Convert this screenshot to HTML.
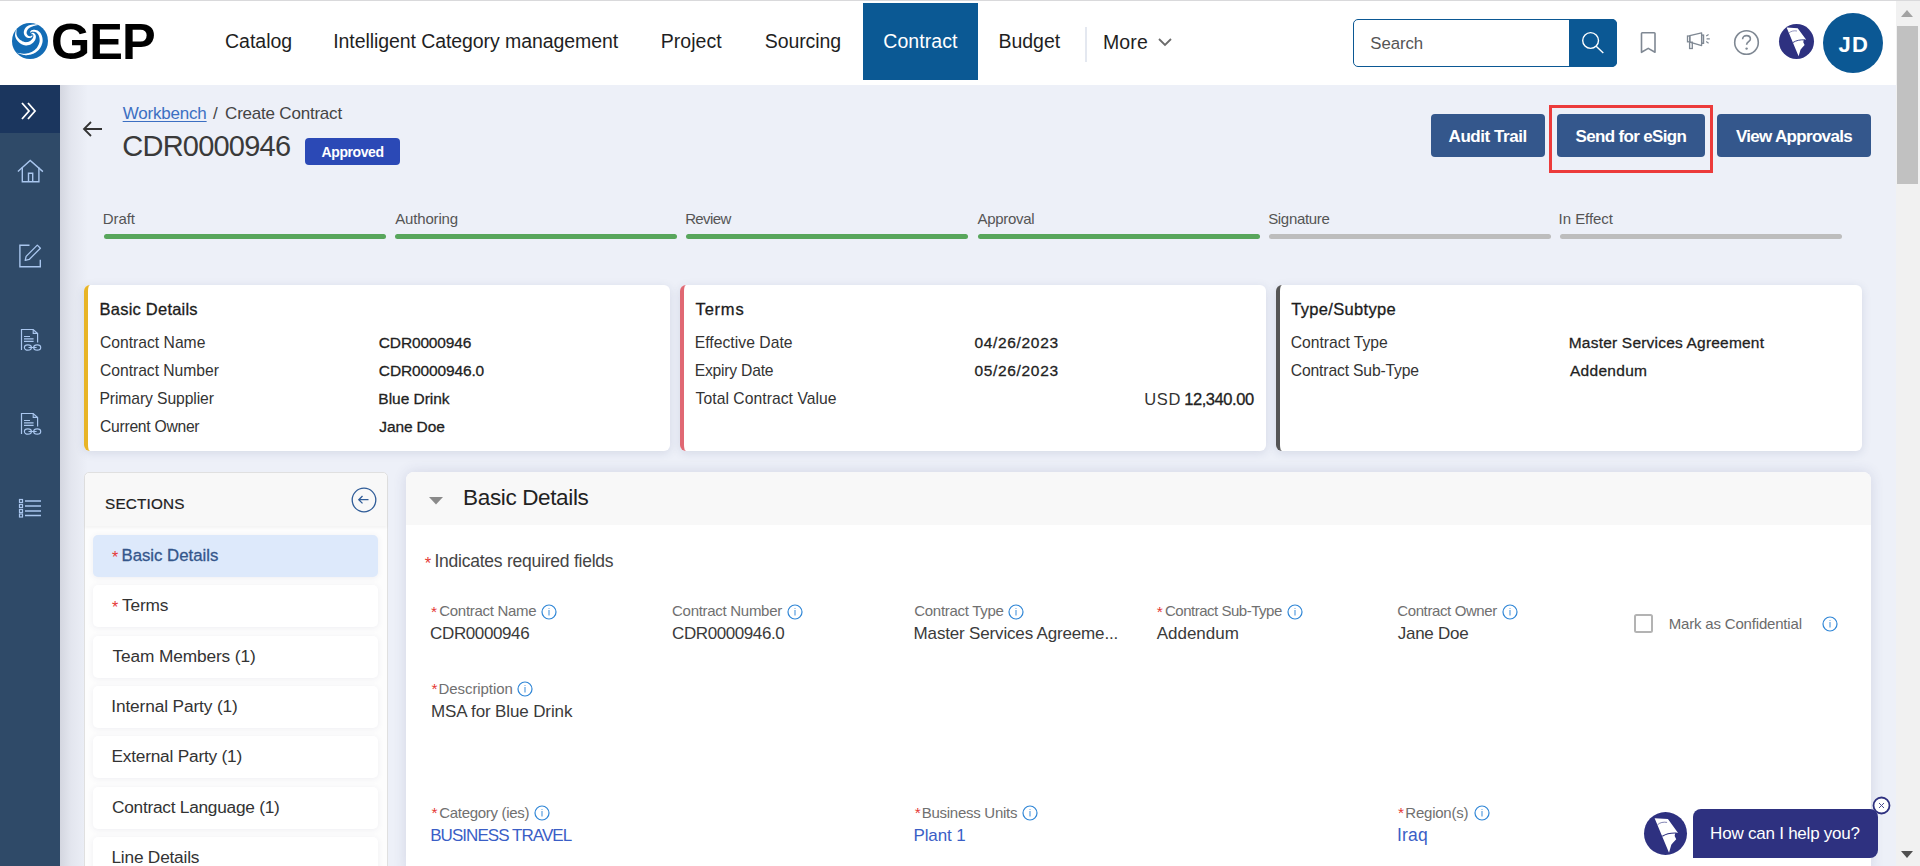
<!DOCTYPE html>
<html><head><meta charset="utf-8"><title>GEP Contract</title>
<style>
html,body{margin:0;padding:0;}
body{width:1920px;height:866px;overflow:hidden;position:relative;background:#edf0f8;font-family:"Liberation Sans", sans-serif;}
.t{position:absolute;line-height:1;white-space:nowrap;}
.b{position:absolute;}
svg.b{overflow:visible;}
</style></head><body>
<div class="b" style="left:0px;top:0px;width:1896px;height:85px;background:#fff;"></div>
<div class="b" style="left:0px;top:0px;width:1920px;height:1px;background:#d9d9db;"></div>
<svg class="b" style="left:12px;top:23px" width="36" height="36" viewBox="0 0 36 36"><circle cx="18" cy="18" r="18" fill="#136cb5"/><path d="M4.40 6.00 L4.22 6.37 L4.04 6.87 L3.85 7.46 L3.66 8.14 L3.48 8.87 L3.31 9.63 L3.17 10.41 L3.08 11.19 L3.04 11.95 L3.09 12.67 L3.20 13.34 L3.37 13.99 L3.58 14.62 L3.84 15.25 L4.13 15.86 L4.47 16.45 L4.83 17.01 L5.23 17.56 L5.65 18.08 L6.09 18.57 L6.58 19.05 L7.11 19.52 L7.68 19.96 L8.27 20.38 L8.89 20.77 L9.53 21.13 L10.18 21.45 L10.83 21.74 L11.49 21.98 L12.15 22.17 L12.82 22.30 L13.49 22.38 L14.15 22.41 L14.81 22.40 L15.46 22.34 L16.10 22.24 L16.72 22.10 L17.32 21.93 L17.90 21.73 L18.47 21.49 L19.04 21.20 L19.59 20.86 L20.11 20.48 L20.60 20.07 L21.05 19.64 L21.48 19.20 L21.87 18.76 L22.23 18.31 L22.55 17.88 L22.84 17.44 L23.10 16.98 L23.33 16.50 L23.51 16.02 L23.65 15.54 L23.76 15.07 L23.83 14.61 L23.87 14.16 L23.88 13.73 L23.86 13.32 L23.81 12.90 L23.72 12.47 L23.57 12.05 L23.39 11.67 L23.18 11.32 L22.95 11.00 L22.71 10.72 L22.45 10.47 L22.20 10.25 L21.94 10.06 L21.65 9.89 L21.28 9.76 L20.91 9.73 L20.59 9.77 L20.31 9.85 L20.06 9.95 L19.84 10.06 L19.65 10.17 L19.50 10.27 L19.39 10.35 L19.32 10.41 L19.48 11.19 L19.63 11.21 L19.81 11.20 L19.99 11.18 L20.18 11.16 L20.37 11.15 L20.54 11.16 L20.68 11.18 L20.76 11.23 L20.77 11.27 L20.75 11.31 L20.80 11.40 L20.89 11.54 L21.00 11.71 L21.10 11.91 L21.20 12.12 L21.28 12.34 L21.35 12.55 L21.39 12.75 L21.40 12.93 L21.39 13.10 L21.36 13.31 L21.32 13.56 L21.26 13.83 L21.19 14.11 L21.09 14.40 L20.98 14.69 L20.85 14.97 L20.71 15.25 L20.55 15.51 L20.36 15.76 L20.13 16.05 L19.86 16.36 L19.55 16.69 L19.23 17.01 L18.88 17.33 L18.53 17.63 L18.17 17.91 L17.81 18.15 L17.47 18.35 L17.13 18.51 L16.76 18.65 L16.35 18.78 L15.93 18.90 L15.49 18.99 L15.05 19.06 L14.60 19.11 L14.15 19.13 L13.71 19.13 L13.27 19.10 L12.85 19.03 L12.40 18.93 L11.91 18.79 L11.40 18.61 L10.87 18.39 L10.33 18.14 L9.80 17.87 L9.28 17.57 L8.79 17.27 L8.33 16.95 L7.91 16.63 L7.51 16.28 L7.11 15.91 L6.73 15.52 L6.36 15.11 L6.02 14.68 L5.69 14.23 L5.40 13.77 L5.13 13.30 L4.90 12.82 L4.71 12.33 L4.57 11.81 L4.48 11.18 L4.43 10.48 L4.42 9.75 L4.44 9.00 L4.47 8.26 L4.49 7.57 L4.51 6.94 L4.49 6.41 L4.40 6.00Z" fill="#fff"/><path d="M5.00 29.80 L5.42 30.02 L5.97 30.25 L6.63 30.52 L7.37 30.80 L8.18 31.08 L9.03 31.36 L9.91 31.61 L10.79 31.83 L11.66 31.99 L12.48 32.10 L13.28 32.14 L14.08 32.15 L14.89 32.13 L15.71 32.07 L16.53 31.98 L17.34 31.86 L18.14 31.71 L18.93 31.52 L19.70 31.30 L20.44 31.05 L21.16 30.76 L21.87 30.45 L22.57 30.10 L23.25 29.71 L23.92 29.29 L24.57 28.84 L25.19 28.35 L25.79 27.83 L26.36 27.28 L26.89 26.69 L27.40 26.06 L27.88 25.39 L28.33 24.68 L28.76 23.94 L29.15 23.17 L29.50 22.40 L29.82 21.61 L30.09 20.82 L30.31 20.04 L30.48 19.26 L30.58 18.47 L30.63 17.68 L30.62 16.89 L30.56 16.11 L30.46 15.35 L30.33 14.62 L30.16 13.91 L29.97 13.23 L29.75 12.59 L29.52 11.98 L29.25 11.40 L28.94 10.84 L28.60 10.31 L28.23 9.81 L27.84 9.35 L27.42 8.92 L26.99 8.53 L26.54 8.18 L26.08 7.87 L25.60 7.59 L25.08 7.34 L24.52 7.15 L23.96 7.01 L23.39 6.92 L22.83 6.86 L22.29 6.83 L21.76 6.83 L21.27 6.86 L20.81 6.91 L20.38 6.99 L19.95 7.12 L19.55 7.33 L19.21 7.57 L18.93 7.84 L18.70 8.10 L18.50 8.37 L18.33 8.61 L18.20 8.81 L18.11 8.98 L18.04 9.10 L18.56 9.70 L18.73 9.61 L18.92 9.47 L19.12 9.32 L19.33 9.15 L19.54 9.00 L19.77 8.85 L19.99 8.74 L20.21 8.66 L20.41 8.62 L20.62 8.61 L20.91 8.63 L21.28 8.66 L21.68 8.70 L22.11 8.77 L22.54 8.86 L22.97 8.97 L23.39 9.10 L23.77 9.25 L24.11 9.42 L24.40 9.61 L24.68 9.84 L24.98 10.10 L25.27 10.39 L25.56 10.70 L25.83 11.04 L26.08 11.40 L26.31 11.78 L26.53 12.17 L26.72 12.58 L26.88 13.02 L27.04 13.50 L27.19 14.03 L27.32 14.59 L27.44 15.18 L27.54 15.78 L27.60 16.39 L27.64 17.00 L27.64 17.60 L27.60 18.18 L27.52 18.74 L27.40 19.32 L27.23 19.94 L27.01 20.59 L26.76 21.25 L26.48 21.91 L26.16 22.57 L25.82 23.21 L25.46 23.82 L25.09 24.39 L24.71 24.91 L24.31 25.40 L23.88 25.87 L23.42 26.33 L22.93 26.77 L22.42 27.18 L21.88 27.58 L21.32 27.96 L20.75 28.31 L20.16 28.65 L19.56 28.95 L18.94 29.23 L18.29 29.49 L17.61 29.73 L16.91 29.95 L16.19 30.14 L15.45 30.31 L14.71 30.45 L13.97 30.56 L13.24 30.65 L12.52 30.70 L11.78 30.72 L10.97 30.67 L10.12 30.57 L9.25 30.44 L8.38 30.29 L7.55 30.14 L6.77 30.00 L6.07 29.88 L5.47 29.80 L5.00 29.80Z" fill="#fff"/><path d="M27.00 1.60 L26.65 1.51 L26.21 1.45 L25.69 1.41 L25.10 1.38 L24.47 1.37 L23.81 1.37 L23.13 1.37 L22.46 1.40 L21.80 1.43 L21.18 1.48 L20.60 1.55 L20.07 1.63 L19.54 1.71 L19.02 1.81 L18.51 1.92 L18.01 2.05 L17.51 2.20 L17.02 2.36 L16.55 2.54 L16.09 2.74 L15.65 2.97 L15.22 3.22 L14.81 3.51 L14.43 3.82 L14.08 4.16 L13.76 4.51 L13.47 4.87 L13.20 5.24 L12.96 5.61 L12.75 5.98 L12.56 6.35 L12.40 6.72 L12.25 7.08 L12.12 7.45 L12.01 7.83 L11.92 8.22 L11.86 8.61 L11.82 9.00 L11.80 9.39 L11.81 9.79 L11.85 10.17 L11.91 10.56 L12.00 10.94 L12.12 11.31 L12.27 11.68 L12.45 12.04 L12.66 12.39 L12.88 12.72 L13.13 13.04 L13.39 13.35 L13.67 13.63 L13.97 13.90 L14.27 14.15 L14.59 14.37 L14.93 14.56 L15.30 14.72 L15.67 14.84 L16.05 14.92 L16.42 14.98 L16.79 15.00 L17.15 15.01 L17.51 15.00 L17.85 14.96 L18.17 14.91 L18.47 14.85 L18.78 14.76 L19.09 14.64 L19.37 14.47 L19.62 14.27 L19.83 14.07 L20.02 13.86 L20.18 13.65 L20.33 13.45 L20.45 13.27 L20.54 13.12 L20.61 12.99 L20.67 12.90 L20.13 12.30 L20.01 12.37 L19.86 12.47 L19.70 12.58 L19.54 12.71 L19.37 12.83 L19.19 12.95 L19.02 13.06 L18.85 13.15 L18.69 13.21 L18.55 13.23 L18.42 13.24 L18.25 13.23 L18.03 13.22 L17.80 13.20 L17.55 13.17 L17.29 13.13 L17.04 13.07 L16.80 13.00 L16.57 12.93 L16.37 12.84 L16.20 12.74 L16.07 12.64 L15.93 12.52 L15.78 12.37 L15.62 12.19 L15.46 11.99 L15.30 11.78 L15.15 11.55 L15.02 11.33 L14.90 11.10 L14.81 10.88 L14.73 10.67 L14.68 10.49 L14.65 10.31 L14.62 10.12 L14.61 9.91 L14.61 9.70 L14.62 9.49 L14.64 9.26 L14.68 9.04 L14.73 8.81 L14.79 8.58 L14.86 8.36 L14.95 8.12 L15.05 7.87 L15.18 7.61 L15.31 7.34 L15.46 7.07 L15.61 6.80 L15.78 6.54 L15.96 6.29 L16.15 6.04 L16.35 5.81 L16.56 5.59 L16.78 5.38 L17.04 5.18 L17.33 4.97 L17.65 4.77 L18.00 4.56 L18.37 4.36 L18.77 4.17 L19.19 3.98 L19.63 3.79 L20.08 3.61 L20.54 3.43 L21.00 3.25 L21.49 3.08 L22.05 2.92 L22.65 2.77 L23.29 2.61 L23.93 2.47 L24.57 2.33 L25.18 2.19 L25.75 2.05 L26.25 1.91 L26.68 1.77 L27.00 1.60Z" fill="#fff"/></svg>
<div class="t" style="left:51.00px;top:16.95px;font-size:50.5px;color:#000;font-weight:700;letter-spacing:-1.0px;">GEP</div>
<div class="t" style="left:225.00px;top:32.29px;font-size:19.5px;color:#1f1f1f;">Catalog</div>
<div class="t" style="left:333.25px;top:32.29px;font-size:19.5px;color:#1f1f1f;letter-spacing:-0.079px;">Intelligent Category management</div>
<div class="t" style="left:660.67px;top:32.29px;font-size:19.5px;color:#1f1f1f;letter-spacing:0.054px;">Project</div>
<div class="t" style="left:764.73px;top:32.29px;font-size:19.5px;color:#1f1f1f;letter-spacing:-0.096px;">Sourcing</div>
<div class="b" style="left:863px;top:3px;width:115px;height:77px;background:#0b5994;"></div>
<div class="t" style="left:883.30px;top:32.29px;font-size:19.5px;color:#fff;letter-spacing:0.071px;">Contract</div>
<div class="t" style="left:998.38px;top:32.29px;font-size:19.5px;color:#1f1f1f;">Budget</div>
<div class="b" style="left:1085px;top:27px;width:2px;height:35px;background:#e4e8f0;"></div>
<div class="t" style="left:1102.88px;top:33.29px;font-size:19.5px;color:#1f1f1f;letter-spacing:0.167px;">More</div>
<svg class="b" style="left:1157px;top:37px" width="16" height="10" viewBox="0 0 16 10"><path d="M2 2 L8 8 L14 2" fill="none" stroke="#6b6b6b" stroke-width="1.8"/></svg>
<div class="b" style="left:1353px;top:19px;width:264px;height:48px;box-sizing:border-box;border:1.5px solid #0b5894;border-radius:5px;background:#fff;"></div>
<div class="b" style="left:1569px;top:19px;width:48px;height:48px;background:#0b5894;border-radius:0 5px 5px 0;"></div>
<div class="t" style="left:1370.30px;top:36.08px;font-size:16.8px;color:#555;letter-spacing:-0.075px;">Search</div>
<svg class="b" style="left:1581px;top:31px" width="24" height="24" viewBox="0 0 24 24"><circle cx="9.6" cy="9.5" r="7.9" fill="none" stroke="#fff" stroke-width="1.4"/><path d="M15.2 15.2 L22.3 22" stroke="#fff" stroke-width="1.4"/></svg>
<svg class="b" style="left:1638px;top:31px" width="20" height="24" viewBox="0 0 20 24"><path d="M3.5 2.5 Q3.5 1.8 4.3 1.8 H16.2 Q17 1.8 17 2.5 V21.3 L10.25 17.4 L3.5 21.3 Z" fill="none" stroke="#7f8893" stroke-width="1.6" stroke-linejoin="round"/></svg>
<svg class="b" style="left:1684px;top:30px" width="30" height="20" viewBox="0 0 30 20"><rect x="3.5" y="6" width="2.3" height="5.8" fill="none" stroke="#7f8893" stroke-width="1.3"/><path d="M5.8 5.6 L17.6 2.8 V15.6 L5.8 12.2 Z" fill="none" stroke="#7f8893" stroke-width="1.3" stroke-linejoin="round"/><rect x="5.6" y="12.2" width="2.7" height="6.3" fill="none" stroke="#7f8893" stroke-width="1.3"/><rect x="17.8" y="5" width="1.8" height="8.4" fill="none" stroke="#7f8893" stroke-width="1.2"/><path d="M22.2 5.9 L24.6 4.4 M22.6 8.9 H25.8 M22.2 11.6 L24.6 13.2" stroke="#7f8893" stroke-width="1.2"/></svg>
<svg class="b" style="left:1733px;top:28.5px" width="27" height="27" viewBox="0 0 27 27"><circle cx="13.5" cy="13.5" r="11.8" fill="none" stroke="#7f8893" stroke-width="1.6"/><path d="M9.6 10.3 C9.6 7.8 11.3 6.6 13.5 6.6 C15.8 6.6 17.4 8 17.4 10 C17.4 12.6 13.6 12.9 13.6 15.8" fill="none" stroke="#7f8893" stroke-width="1.6"/><circle cx="13.6" cy="19.6" r="1.2" fill="#7f8893"/></svg>
<svg class="b" style="left:1779px;top:24px" width="35" height="35" viewBox="0 0 35 35"><circle cx="17.5" cy="17.5" r="17.5" fill="#2e3180"/><path d="M7.6 3.5 L18.7 4.2 L27 15.6 L24.7 16 L24.3 18.3 L25.6 21.1 L22.9 23.9 L21.5 25.7 L19.6 32.2 Z" fill="#fff"/><path d="M14 18.5 C17 16.5 21 15.6 26 15.8" fill="none" stroke="#2e3180" stroke-width="0.9"/><path d="M10 9 C12 7 15 6.5 18 7" fill="none" stroke="#2e3180" stroke-width="0.5"/></svg>
<svg class="b" style="left:1823px;top:13px" width="60" height="60" viewBox="0 0 60 60"><circle cx="30" cy="30" r="30" fill="#0b5894"/></svg>
<div class="t" style="left:1838.62px;top:34.38px;font-size:22px;color:#fff;font-weight:700;letter-spacing:1.125px;">JD</div>
<div class="b" style="left:1896px;top:1px;width:24px;height:865px;background:#f1f1f1;"></div>
<div class="b" style="left:1897px;top:26px;width:21px;height:158px;background:#c1c1c1;"></div>
<svg class="b" style="left:1901px;top:10px" width="12" height="8" viewBox="0 0 12 8"><path d="M0 7 L6 0 L12 7 Z" fill="#a3a3a3"/></svg>
<svg class="b" style="left:1901px;top:851px" width="12" height="7" viewBox="0 0 12 7"><path d="M0 0 L12 0 L6 7 Z" fill="#505050"/></svg>
<div class="b" style="left:0px;top:85px;width:60px;height:781px;background:#2f4a68;"></div>
<div class="b" style="left:0px;top:85px;width:60px;height:48px;background:#1b365e;"></div>
<div class="b" style="left:60px;top:85px;width:28px;height:781px;background:linear-gradient(to right, rgba(40,40,60,0.13), rgba(40,40,60,0.05) 40%, rgba(40,40,60,0));"></div>
<svg class="b" style="left:19px;top:101px" width="18" height="20" viewBox="0 0 18 20"><path d="M3 2 L10 10 L3 18 M9 2 L16 10 L9 18" fill="none" stroke="#fff" stroke-width="1.8"/></svg>
<svg class="b" style="left:17px;top:158px" width="28" height="27" viewBox="0 0 28 27"><path d="M0.9 13.6 L13.2 2.4 L25.9 13.6" fill="none" stroke="#a9c6ee" stroke-width="1.4"/><path d="M5.3 9.6 V23.8 H21.9 V9.6" fill="none" stroke="#a9c6ee" stroke-width="1.4"/><path d="M11.5 23.8 V15.2 H15.7 V23.8" fill="none" stroke="#a9c6ee" stroke-width="1.4"/></svg>
<svg class="b" style="left:18px;top:243px" width="26" height="26" viewBox="0 0 26 26"><path d="M11.5 2.2 H1.9 V23.8 H22.3 V16.7" fill="none" stroke="#a9c6ee" stroke-width="1.4"/><path d="M7.2 17.4 L8.1 13.35 L19.3 2.1 L22.4 5.2 L11.2 16.45 Z" fill="none" stroke="#a9c6ee" stroke-width="1.3" stroke-linejoin="round"/></svg>
<svg class="b" style="left:20px;top:328px" width="22" height="24" viewBox="0 0 22 24"><path d="M1.5 21.9 V1.5 H13.2 L17.6 5.6 V14.6" fill="none" stroke="#a9c6ee" stroke-width="1.2"/><path d="M13.2 1.8 V5.4 H17.4" fill="none" stroke="#a9c6ee" stroke-width="1.1"/><path d="M4 8.5 H10 M4 10.9 H13.6 M4 13.4 H13.6" stroke="#a9c6ee" stroke-width="1.1"/><ellipse cx="7.9" cy="19.5" rx="3.5" ry="2.7" fill="none" stroke="#a9c6ee" stroke-width="1.2"/><ellipse cx="17.2" cy="19.5" rx="3.5" ry="2.7" fill="none" stroke="#a9c6ee" stroke-width="1.2"/><path d="M8.5 19.5 H16.6" stroke="#a9c6ee" stroke-width="1.1"/></svg>
<svg class="b" style="left:20px;top:412px" width="22" height="24" viewBox="0 0 22 24"><path d="M1.5 21.9 V1.5 H13.2 L17.6 5.6 V14.6" fill="none" stroke="#a9c6ee" stroke-width="1.2"/><path d="M13.2 1.8 V5.4 H17.4" fill="none" stroke="#a9c6ee" stroke-width="1.1"/><path d="M4 8.5 H10 M4 10.9 H13.6 M4 13.4 H13.6" stroke="#a9c6ee" stroke-width="1.1"/><ellipse cx="7.9" cy="19.5" rx="3.5" ry="2.7" fill="none" stroke="#a9c6ee" stroke-width="1.2"/><ellipse cx="17.2" cy="19.5" rx="3.5" ry="2.7" fill="none" stroke="#a9c6ee" stroke-width="1.2"/><path d="M8.5 19.5 H16.6" stroke="#a9c6ee" stroke-width="1.1"/></svg>
<svg class="b" style="left:18px;top:498px" width="24" height="20" viewBox="0 0 24 20"><rect x="1.5" y="1.5" width="3" height="3" fill="none" stroke="#a9c6ee" stroke-width="1.2"/><rect x="1.5" y="6.5" width="3" height="3" fill="none" stroke="#a9c6ee" stroke-width="1.2"/><rect x="1.5" y="11.5" width="3" height="3" fill="none" stroke="#a9c6ee" stroke-width="1.2"/><rect x="1.5" y="16" width="3" height="3" fill="none" stroke="#a9c6ee" stroke-width="1.2"/><path d="M7 3 H23 M7 8 H23 M7 13 H23 M7 17.5 H23" stroke="#a9c6ee" stroke-width="1.6"/></svg>
<svg class="b" style="left:82px;top:120px" width="22" height="18" viewBox="0 0 22 18"><path d="M9 2 L2 9 L9 16 M2 9 H20" fill="none" stroke="#333" stroke-width="1.8"/></svg>
<div class="t" style="left:122.67px;top:104.61px;font-size:17px;color:#3c6fc2;letter-spacing:-0.188px;text-decoration:underline;text-underline-offset:2px;">Workbench</div>
<div class="t" style="left:213.00px;top:104.61px;font-size:17px;color:#444;">/</div>
<div class="t" style="left:225.12px;top:104.61px;font-size:17px;color:#444;letter-spacing:-0.214px;">Create Contract</div>
<div class="t" style="left:122.30px;top:132.05px;font-size:29px;color:#3a3a3a;letter-spacing:-0.778px;">CDR0000946</div>
<div class="b" style="left:305px;top:138px;width:95px;height:27px;background:#2b49b6;border-radius:4px;"></div>
<div class="t" style="left:321.62px;top:144.75px;font-size:14px;color:#fff;font-weight:700;letter-spacing:-0.429px;">Approved</div>
<div class="b" style="left:1431px;top:114px;width:114px;height:43px;background:#34578c;border-radius:4px;"></div>
<div class="t" style="left:1448.62px;top:128.11px;font-size:17px;color:#fff;font-weight:700;letter-spacing:-0.45px;">Audit Trail</div>
<div class="b" style="left:1557px;top:114px;width:148px;height:43px;background:#34578c;border-radius:4px;"></div>
<div class="t" style="left:1575.50px;top:128.11px;font-size:17px;color:#fff;font-weight:700;letter-spacing:-0.654px;">Send for eSign</div>
<div class="b" style="left:1717px;top:114px;width:154px;height:43px;background:#34578c;border-radius:4px;"></div>
<div class="t" style="left:1735.88px;top:128.11px;font-size:17px;color:#fff;font-weight:700;letter-spacing:-0.683px;">View Approvals</div>
<div class="b" style="left:1549px;top:105px;width:164px;height:68px;box-sizing:border-box;border:3px solid #ec3b3b;"></div>
<div class="t" style="left:102.75px;top:211.20px;font-size:15px;color:#555;letter-spacing:-0.062px;">Draft</div>
<div class="b" style="left:104px;top:234px;width:282px;height:5px;background:#58a65c;border-radius:3px;"></div>
<div class="t" style="left:395.20px;top:211.20px;font-size:15px;color:#555;letter-spacing:-0.156px;">Authoring</div>
<div class="b" style="left:395px;top:234px;width:282px;height:5px;background:#58a65c;border-radius:3px;"></div>
<div class="t" style="left:685.15px;top:211.20px;font-size:15px;color:#555;letter-spacing:-0.6px;">Review</div>
<div class="b" style="left:686px;top:234px;width:282px;height:5px;background:#58a65c;border-radius:3px;"></div>
<div class="t" style="left:977.60px;top:211.20px;font-size:15px;color:#555;letter-spacing:-0.321px;">Approval</div>
<div class="b" style="left:978px;top:234px;width:282px;height:5px;background:#58a65c;border-radius:3px;"></div>
<div class="t" style="left:1268.17px;top:211.20px;font-size:15px;color:#555;letter-spacing:-0.312px;">Signature</div>
<div class="b" style="left:1269px;top:234px;width:282px;height:5px;background:#bdbdbd;border-radius:3px;"></div>
<div class="t" style="left:1558.62px;top:211.20px;font-size:15px;color:#555;letter-spacing:-0.047px;">In Effect</div>
<div class="b" style="left:1560px;top:234px;width:282px;height:5px;background:#bdbdbd;border-radius:3px;"></div>
<div class="b" style="left:84px;top:285px;width:586px;height:166px;background:#fff;border-radius:6px;box-shadow:0 2px 10px rgba(50,60,110,0.13);"></div>
<div class="b" style="left:84px;top:285px;width:6px;height:166px;border-left:4px solid #e8b426;border-radius:6px 0 0 6px;box-sizing:border-box;"></div>
<div class="b" style="left:680px;top:285px;width:586px;height:166px;background:#fff;border-radius:6px;box-shadow:0 2px 10px rgba(50,60,110,0.13);"></div>
<div class="b" style="left:680px;top:285px;width:6px;height:166px;border-left:4px solid #e06873;border-radius:6px 0 0 6px;box-sizing:border-box;"></div>
<div class="b" style="left:1276px;top:285px;width:586px;height:166px;background:#fff;border-radius:6px;box-shadow:0 2px 10px rgba(50,60,110,0.13);"></div>
<div class="b" style="left:1276px;top:285px;width:6px;height:166px;border-left:4px solid #555555;border-radius:6px 0 0 6px;box-sizing:border-box;"></div>
<div class="t" style="left:99.62px;top:301.03px;font-size:16.5px;color:#1c1c1c;-webkit-text-stroke:0.30px #1c1c1c;letter-spacing:0.219px;">Basic Details</div>
<div class="t" style="left:100.00px;top:335.21px;font-size:15.7px;color:#333;letter-spacing:-0.01px;">Contract Name</div>
<div class="t" style="left:378.85px;top:335.18px;font-size:15.5px;color:#222;-webkit-text-stroke:0.28px #222;letter-spacing:-0.167px;">CDR0000946</div>
<div class="t" style="left:100.00px;top:362.91px;font-size:15.7px;color:#333;letter-spacing:-0.036px;">Contract Number</div>
<div class="t" style="left:378.85px;top:362.88px;font-size:15.5px;color:#222;-webkit-text-stroke:0.28px #222;letter-spacing:-0.136px;">CDR0000946.0</div>
<div class="t" style="left:99.50px;top:390.71px;font-size:15.7px;color:#333;letter-spacing:-0.1px;">Primary Supplier</div>
<div class="t" style="left:378.35px;top:390.68px;font-size:15.5px;color:#222;-webkit-text-stroke:0.28px #222;letter-spacing:-0.028px;">Blue Drink</div>
<div class="t" style="left:100.00px;top:418.81px;font-size:15.7px;color:#333;letter-spacing:-0.273px;">Current Owner</div>
<div class="t" style="left:379.35px;top:418.78px;font-size:15.5px;color:#222;-webkit-text-stroke:0.28px #222;letter-spacing:-0.129px;">Jane Doe</div>
<div class="t" style="left:695.62px;top:301.03px;font-size:16.5px;color:#1c1c1c;-webkit-text-stroke:0.30px #1c1c1c;letter-spacing:0.781px;">Terms</div>
<div class="t" style="left:694.70px;top:335.21px;font-size:15.7px;color:#333;letter-spacing:0.038px;">Effective Date</div>
<div class="t" style="left:974.38px;top:335.18px;font-size:15.5px;color:#222;-webkit-text-stroke:0.28px #222;letter-spacing:0.681px;">04/26/2023</div>
<div class="t" style="left:694.70px;top:362.91px;font-size:15.7px;color:#333;letter-spacing:-0.225px;">Expiry Date</div>
<div class="t" style="left:974.38px;top:362.88px;font-size:15.5px;color:#222;-webkit-text-stroke:0.28px #222;letter-spacing:0.681px;">05/26/2023</div>
<div class="t" style="left:695.58px;top:390.71px;font-size:15.7px;color:#333;letter-spacing:0.046px;">Total Contract Value</div>
<div class="t" style="left:1144.25px;top:391.03px;font-size:16.5px;color:#333;letter-spacing:0.625px;">USD</div>
<div class="t" style="left:1184.25px;top:391.03px;font-size:16.5px;color:#222;-webkit-text-stroke:0.30px #222;letter-spacing:-0.438px;">12,340.00</div>
<div class="t" style="left:1291.22px;top:301.03px;font-size:16.5px;color:#1c1c1c;-webkit-text-stroke:0.30px #1c1c1c;letter-spacing:0.33px;">Type/Subtype</div>
<div class="t" style="left:1290.80px;top:335.21px;font-size:15.7px;color:#333;letter-spacing:-0.042px;">Contract Type</div>
<div class="t" style="left:1568.75px;top:335.18px;font-size:15.5px;color:#222;-webkit-text-stroke:0.28px #222;letter-spacing:0.203px;">Master Services Agreement</div>
<div class="t" style="left:1290.80px;top:362.91px;font-size:15.7px;color:#333;letter-spacing:-0.156px;">Contract Sub-Type</div>
<div class="t" style="left:1570.00px;top:362.88px;font-size:15.5px;color:#222;-webkit-text-stroke:0.28px #222;letter-spacing:0.286px;">Addendum</div>
<div class="b" style="left:84px;top:472px;width:304px;height:400px;background:#fdfdfd;border:1px solid #e0e0e0;border-radius:5px 5px 0 0;box-sizing:border-box;"></div>
<div class="b" style="left:85px;top:473px;width:302px;height:53px;background:#f8f8f8;border-radius:5px 5px 0 0;box-shadow:0 2px 3px rgba(0,0,0,0.04);"></div>
<div class="t" style="left:105.10px;top:495.65px;font-size:15.3px;color:#222;letter-spacing:0.179px;-webkit-text-stroke:0.2px #222;">SECTIONS</div>
<svg class="b" style="left:351px;top:487px" width="26" height="26" viewBox="0 0 26 26"><circle cx="13" cy="13" r="11.8" fill="none" stroke="#2f5c98" stroke-width="1.3"/><path d="M11.5 9 L7.8 12.7 L11.5 16.4 M7.8 12.7 H17.5" fill="none" stroke="#2f5c98" stroke-width="1.3"/></svg>
<div class="b" style="left:93px;top:535px;width:285px;height:42px;background:#dde9fb;border-radius:5px;box-shadow:0 1px 6px rgba(60,70,120,0.08);"></div>
<div class="t" style="left:112.00px;top:549.96px;font-size:16px;color:#e53935;">*</div>
<div class="t" style="left:121.47px;top:547.88px;font-size:16.8px;color:#34568b;-webkit-text-stroke:0.30px #34568b;letter-spacing:-0.01px;">Basic Details</div>
<div class="b" style="left:93px;top:585px;width:285px;height:42px;background:#fff;border-radius:5px;box-shadow:0 1px 6px rgba(60,70,120,0.08);"></div>
<div class="t" style="left:112.00px;top:600.31px;font-size:16px;color:#e53935;">*</div>
<div class="t" style="left:121.97px;top:597.21px;font-size:17.3px;color:#333;letter-spacing:-0.156px;">Terms</div>
<div class="b" style="left:93px;top:636px;width:285px;height:42px;background:#fff;border-radius:5px;box-shadow:0 1px 6px rgba(60,70,120,0.08);"></div>
<div class="t" style="left:112.47px;top:647.56px;font-size:17.3px;color:#333;letter-spacing:-0.117px;">Team Members (1)</div>
<div class="b" style="left:93px;top:686px;width:285px;height:42px;background:#fff;border-radius:5px;box-shadow:0 1px 6px rgba(60,70,120,0.08);"></div>
<div class="t" style="left:111.22px;top:697.91px;font-size:17.3px;color:#333;letter-spacing:-0.125px;">Internal Party (1)</div>
<div class="b" style="left:93px;top:736px;width:285px;height:42px;background:#fff;border-radius:5px;box-shadow:0 1px 6px rgba(60,70,120,0.08);"></div>
<div class="t" style="left:111.47px;top:748.26px;font-size:17.3px;color:#333;letter-spacing:-0.219px;">External Party (1)</div>
<div class="b" style="left:93px;top:787px;width:285px;height:42px;background:#fff;border-radius:5px;box-shadow:0 1px 6px rgba(60,70,120,0.08);"></div>
<div class="t" style="left:111.97px;top:798.61px;font-size:17.3px;color:#333;letter-spacing:-0.256px;">Contract Language (1)</div>
<div class="b" style="left:93px;top:837px;width:285px;height:42px;background:#fff;border-radius:5px;box-shadow:0 1px 6px rgba(60,70,120,0.08);"></div>
<div class="t" style="left:111.47px;top:848.96px;font-size:17.3px;color:#333;letter-spacing:-0.216px;">Line Details</div>
<div class="b" style="left:406px;top:472px;width:1465px;height:400px;background:#fff;border-radius:8px 8px 0 0;box-shadow:0 0 14px rgba(50,60,110,0.14);"></div>
<div class="b" style="left:406px;top:472px;width:1465px;height:53px;background:#f8f8f8;border-radius:8px 8px 0 0;"></div>
<svg class="b" style="left:427px;top:495px" width="17" height="11" viewBox="0 0 17 11"><path d="M2 2 H16 L9 9.5 Z" fill="#8a8a8a"/></svg>
<div class="t" style="left:463.12px;top:487.45px;font-size:22.5px;color:#222;letter-spacing:-0.365px;">Basic Details</div>
<div class="t" style="left:424.80px;top:555.03px;font-size:16.5px;color:#e53935;">*</div>
<div class="t" style="left:434.38px;top:552.99px;font-size:17.5px;color:#444;letter-spacing:-0.234px;">Indicates required fields</div>
<div class="t" style="left:431.00px;top:604.08px;font-size:15.5px;color:#e53935;">*</div>
<div class="t" style="left:439.25px;top:603.30px;font-size:15px;color:#707070;letter-spacing:-0.292px;">Contract Name</div>
<svg class="b" style="left:541.1px;top:603.5px" width="16" height="16" viewBox="0 0 16 16"><circle cx="8" cy="8" r="7" fill="none" stroke="#2f86d6" stroke-width="1.2"/><path d="M8 6 V11.5" stroke="#4a95dc" stroke-width="1.1"/><path d="M8 4.3 V5.1" stroke="#4a95dc" stroke-width="1.1"/></svg>
<div class="t" style="left:430.12px;top:624.61px;font-size:17px;color:#3a3a3a;letter-spacing:-0.389px;">CDR0000946</div>
<div class="t" style="left:672.05px;top:603.30px;font-size:15px;color:#707070;letter-spacing:-0.289px;">Contract Number</div>
<svg class="b" style="left:787.2px;top:603.5px" width="16" height="16" viewBox="0 0 16 16"><circle cx="8" cy="8" r="7" fill="none" stroke="#2f86d6" stroke-width="1.2"/><path d="M8 6 V11.5" stroke="#4a95dc" stroke-width="1.1"/><path d="M8 4.3 V5.1" stroke="#4a95dc" stroke-width="1.1"/></svg>
<div class="t" style="left:672.12px;top:624.61px;font-size:17px;color:#3a3a3a;letter-spacing:-0.42px;">CDR0000946.0</div>
<div class="t" style="left:914.25px;top:603.30px;font-size:15px;color:#707070;letter-spacing:-0.288px;">Contract Type</div>
<svg class="b" style="left:1007.5px;top:603.5px" width="16" height="16" viewBox="0 0 16 16"><circle cx="8" cy="8" r="7" fill="none" stroke="#2f86d6" stroke-width="1.2"/><path d="M8 6 V11.5" stroke="#4a95dc" stroke-width="1.1"/><path d="M8 4.3 V5.1" stroke="#4a95dc" stroke-width="1.1"/></svg>
<div class="t" style="left:913.62px;top:624.61px;font-size:17px;color:#3a3a3a;letter-spacing:-0.167px;">Master Services Agreeme...</div>
<div class="t" style="left:1156.70px;top:604.08px;font-size:15.5px;color:#e53935;">*</div>
<div class="t" style="left:1164.95px;top:603.30px;font-size:15px;color:#707070;letter-spacing:-0.484px;">Contract Sub-Type</div>
<svg class="b" style="left:1286.5px;top:603.5px" width="16" height="16" viewBox="0 0 16 16"><circle cx="8" cy="8" r="7" fill="none" stroke="#2f86d6" stroke-width="1.2"/><path d="M8 6 V11.5" stroke="#4a95dc" stroke-width="1.1"/><path d="M8 4.3 V5.1" stroke="#4a95dc" stroke-width="1.1"/></svg>
<div class="t" style="left:1156.70px;top:624.61px;font-size:17px;color:#3a3a3a;letter-spacing:-0.018px;">Addendum</div>
<div class="t" style="left:1397.25px;top:603.30px;font-size:15px;color:#707070;letter-spacing:-0.385px;">Contract Owner</div>
<svg class="b" style="left:1502.2px;top:603.5px" width="16" height="16" viewBox="0 0 16 16"><circle cx="8" cy="8" r="7" fill="none" stroke="#2f86d6" stroke-width="1.2"/><path d="M8 6 V11.5" stroke="#4a95dc" stroke-width="1.1"/><path d="M8 4.3 V5.1" stroke="#4a95dc" stroke-width="1.1"/></svg>
<div class="t" style="left:1397.75px;top:624.61px;font-size:17px;color:#3a3a3a;letter-spacing:-0.268px;">Jane Doe</div>
<div class="b" style="left:1634px;top:614px;width:19px;height:19px;box-sizing:border-box;border:2px solid #b3b3b3;border-radius:2.5px;background:#fff;"></div>
<div class="t" style="left:1668.75px;top:616.30px;font-size:15px;color:#6b6b6b;letter-spacing:-0.184px;">Mark as Confidential</div>
<svg class="b" style="left:1822px;top:616px" width="16" height="16" viewBox="0 0 16 16"><circle cx="8" cy="8" r="7" fill="none" stroke="#2f86d6" stroke-width="1.2"/><path d="M8 6 V11.5" stroke="#4a95dc" stroke-width="1.1"/><path d="M8 4.3 V5.1" stroke="#4a95dc" stroke-width="1.1"/></svg>
<div class="t" style="left:431.60px;top:681.48px;font-size:15.5px;color:#e53935;">*</div>
<div class="t" style="left:438.55px;top:680.70px;font-size:15px;color:#707070;letter-spacing:-0.085px;">Description</div>
<svg class="b" style="left:517.3px;top:680.9px" width="16" height="16" viewBox="0 0 16 16"><circle cx="8" cy="8" r="7" fill="none" stroke="#2f86d6" stroke-width="1.2"/><path d="M8 6 V11.5" stroke="#4a95dc" stroke-width="1.1"/><path d="M8 4.3 V5.1" stroke="#4a95dc" stroke-width="1.1"/></svg>
<div class="t" style="left:430.93px;top:703.01px;font-size:17px;color:#3a3a3a;letter-spacing:-0.126px;">MSA for Blue Drink</div>
<div class="t" style="left:431.60px;top:805.38px;font-size:15.5px;color:#e53935;">*</div>
<div class="t" style="left:439.25px;top:804.60px;font-size:15px;color:#707070;letter-spacing:-0.31px;">Category (ies)</div>
<svg class="b" style="left:534.2px;top:804.8px" width="16" height="16" viewBox="0 0 16 16"><circle cx="8" cy="8" r="7" fill="none" stroke="#2f86d6" stroke-width="1.2"/><path d="M8 6 V11.5" stroke="#4a95dc" stroke-width="1.1"/><path d="M8 4.3 V5.1" stroke="#4a95dc" stroke-width="1.1"/></svg>
<div class="t" style="left:430.23px;top:827.41px;font-size:17px;color:#3a5ec6;letter-spacing:-0.948px;">BUSINESS TRAVEL</div>
<div class="t" style="left:914.80px;top:805.38px;font-size:15.5px;color:#e53935;">*</div>
<div class="t" style="left:921.75px;top:804.60px;font-size:15px;color:#707070;letter-spacing:-0.269px;">Business Units</div>
<svg class="b" style="left:1022.1px;top:804.8px" width="16" height="16" viewBox="0 0 16 16"><circle cx="8" cy="8" r="7" fill="none" stroke="#2f86d6" stroke-width="1.2"/><path d="M8 6 V11.5" stroke="#4a95dc" stroke-width="1.1"/><path d="M8 4.3 V5.1" stroke="#4a95dc" stroke-width="1.1"/></svg>
<div class="t" style="left:913.42px;top:827.41px;font-size:17px;color:#3a5ec6;letter-spacing:-0.092px;">Plant 1</div>
<div class="t" style="left:1398.00px;top:805.38px;font-size:15.5px;color:#e53935;">*</div>
<div class="t" style="left:1405.35px;top:804.60px;font-size:15px;color:#707070;letter-spacing:-0.234px;">Region(s)</div>
<svg class="b" style="left:1474.1px;top:804.8px" width="16" height="16" viewBox="0 0 16 16"><circle cx="8" cy="8" r="7" fill="none" stroke="#2f86d6" stroke-width="1.2"/><path d="M8 6 V11.5" stroke="#4a95dc" stroke-width="1.1"/><path d="M8 4.3 V5.1" stroke="#4a95dc" stroke-width="1.1"/></svg>
<div class="t" style="left:1396.88px;top:826.99px;font-size:17.5px;color:#3a5ec6;letter-spacing:0.208px;">Iraq</div>
<svg class="b" style="left:1644px;top:812px" width="43" height="43" viewBox="0 0 43 43"><circle cx="21.5" cy="21.5" r="21.5" fill="#2e3180"/><g transform="translate(1.5,2) scale(1.2)"><path d="M7.6 3.5 L18.7 4.2 L27 15.6 L24.7 16 L24.3 18.3 L25.6 21.1 L22.9 23.9 L21.5 25.7 L19.6 32.2 Z" fill="#fff"/><path d="M14 18.5 C17 16.5 21 15.6 26 15.8" fill="none" stroke="#2e3180" stroke-width="0.9"/><path d="M10 9 C12 7 15 6.5 18 7" fill="none" stroke="#2e3180" stroke-width="0.5"/></g></svg>
<div class="b" style="left:1693px;top:809px;width:185px;height:49px;background:#2e3180;border-radius:8px 8px 8px 0;"></div>
<div class="t" style="left:1710.12px;top:824.61px;font-size:17px;color:#fff;letter-spacing:-0.229px;">How can I help you?</div>
<svg class="b" style="left:1872px;top:796px" width="19" height="19" viewBox="0 0 19 19"><circle cx="9.5" cy="9.5" r="8" fill="#fff" stroke="#2e3180" stroke-width="1.8"/><path d="M7 7 L12 12 M12 7 L7 12" stroke="#4a4d90" stroke-width="1"/></svg>
</body></html>
